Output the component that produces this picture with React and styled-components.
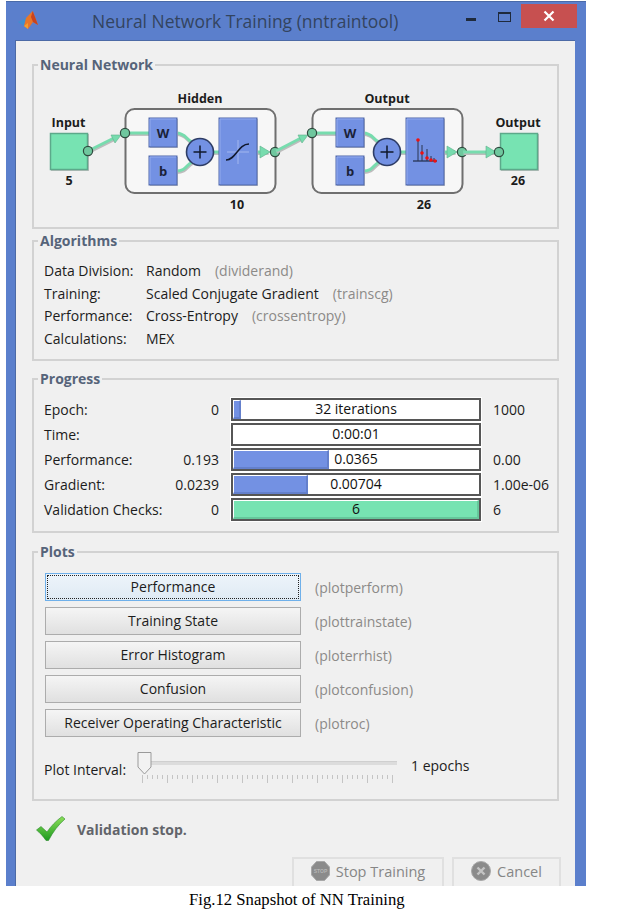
import React from 'react'
import styled, { createGlobalStyle } from 'styled-components'

const GlobalStyle = createGlobalStyle`
  html, body { margin: 0; padding: 0; background: #fff; }
  body { font-family: "Open Sans", "Liberation Sans", sans-serif; font-size: 14px; color: #1c1c1c; }
`

const Page = styled.div`
  width: 623px;
  height: 915px;
  padding: 1px 0 0 6px;
  box-sizing: border-box;
`

const Window = styled.div`
  width: 580px;
  height: 885px;
  background: #5b7fcc;
  display: flex;
  flex-direction: column;
  border-top: 1px solid #4a6aa8;
  box-sizing: border-box;
`

const TitleBar = styled.div`
  height: 38px;
  flex: none;
  display: flex;
  align-items: center;
  padding-left: 12px;
`

const AppTitle = styled.div`
  margin-left: 52px;
  font-size: 17.5px;
  color: #33445f;
  white-space: nowrap;
`

const Controls = styled.div`
  margin-left: auto;
  margin-right: 9px;
  align-self: flex-start;
  display: flex;
  align-items: flex-start;
  margin-top: 2px;
`

const MinButton = styled.div`
  width: 10px;
  height: 3px;
  background: #1f2a3c;
  margin: 14px 22px 0 0;
`

const MaxButton = styled.div`
  width: 13px;
  height: 10px;
  box-sizing: border-box;
  border: 1px solid #1f2a3c;
  border-top-width: 2px;
  margin: 8px 10px 0 0;
`

const CloseButton = styled.div`
  width: 56px;
  height: 24px;
  background: #c75050;
  display: flex;
  align-items: center;
  justify-content: center;
`

const Client = styled.div`
  flex: 1;
  min-height: 0;
  margin: 0 11px 0 9px;
  padding: 16px 16px 0;
  background: #f0f0f0;
  border-top: 1px solid #4c6aa6;
  border-left: 1px solid #4c6aa6;
  overflow: hidden;
  box-sizing: border-box;
`

const Group = styled.fieldset`
  margin: ${p => p.$gap}px 0 0;
  height: ${p => p.$h}px;
  padding: ${p => p.$top}px 10px 0;
  min-width: 0;
  box-sizing: border-box;
  border: 2px solid #d2d2d2;
`

const GroupTitle = styled.legend`
  margin-left: -6px;
  padding: 0 2px;
  height: 16px;
  line-height: 16px;
  font-weight: 700;
  font-size: 14px;
  color: #56647a;
`

const DiagramSvg = styled.svg`
  display: block;
  margin-left: -10px;
`

const AlgoRow = styled.div`
  display: flex;
  height: 22.6px;
  line-height: 22.6px;
`

const AlgoLabel = styled.div`
  width: 102px;
`

const Muted = styled.span`
  color: #8c8a88;
  margin-left: ${p => p.$left || 0}px;
`

const ProgressGrid = styled.div`
  display: grid;
  grid-template-columns: 120px 67px 250px 1fr;
  grid-auto-rows: 23px;
  row-gap: 2px;
  align-items: center;
`

const MinValue = styled.div`
  text-align: right;
  padding-right: 12px;
`

const MaxValue = styled.div`
  padding-left: 12px;
  white-space: nowrap;
`

const Bar = styled.div`
  position: relative;
  height: 23px;
  box-sizing: border-box;
  border: 2px solid #565656;
  background: #fff;
  outline: 1px solid #fff;
`

const BarFill = styled.div`
  height: 100%;
  box-sizing: border-box;
  background: ${p => p.$color};
  border: 1px solid #fff;
  border-bottom: 2px solid ${p => p.$shade};
  border-right: 2px solid ${p => p.$shade};
`

const BarText = styled.div`
  position: absolute;
  inset: 0;
  text-align: center;
  line-height: 18px;
  color: #111;
`

const ButtonRow = styled.div`
  display: flex;
  align-items: center;
  height: 28px;
  margin: 0 0 6px 1px;
`

const PlotButton = styled.div`
  width: 256px;
  height: 28px;
  flex: none;
  box-sizing: border-box;
  margin-right: 14px;
  text-align: center;
  line-height: 26px;
  color: #1c1c1c;
  background: ${p => p.$focus ? 'linear-gradient(#edf4fa, #dfeaf4)' : 'linear-gradient(#f5f5f5, #e0e0e0)'};
  border: 1px solid ${p => p.$focus ? '#6fb0ea' : '#acacac'};
  outline: ${p => p.$focus ? '1px dotted #222' : 'none'};
  outline-offset: -3px;
`

const SliderRow = styled.div`
  display: flex;
  margin-top: 14px;
  height: 34px;
`

const SliderLabel = styled.div`
  width: 93px;
  flex: none;
  margin-top: 9px;
  line-height: 20px;
`

const Slider = styled.div`
  position: relative;
  width: 260px;
  flex: none;
`

const Track = styled.div`
  position: absolute;
  left: 6px;
  right: 0;
  top: 10px;
  height: 3px;
  background: #dcdcdc;
  border-top: 1px solid #cfcfcf;
`

const Thumb = styled.svg`
  position: absolute;
  left: 0;
  top: 0;
`

const TickBox = styled.div`
  position: absolute;
  left: 5px;
  top: 24px;
`

const SliderValue = styled.div`
  margin: 3px 0 0 14px;
  line-height: 24px;
`

const StatusRow = styled.div`
  display: flex;
  align-items: center;
  height: 30px;
  margin: 13px 0 0 4px;
  gap: 11px;
`

const StatusText = styled.div`
  font-weight: 700;
  color: #62646a;
`

const Footer = styled.div`
  display: flex;
  justify-content: flex-end;
  gap: 8px;
  margin: 13px -2px 0 0;
`

const FooterButton = styled.div`
  width: ${p => p.$w}px;
  height: 40px;
  box-sizing: border-box;
  border: 2px solid #e0e0e0;
  display: flex;
  justify-content: center;
  gap: 6px;
  padding-top: 2px;
  font-size: 14.5px;
  line-height: 22px;
  color: #868686;
`

const Caption = styled.div`
  width: 586px;
  margin-top: 5px;
  padding-left: 183px;
  box-sizing: border-box;
  font-family: "Liberation Serif", serif;
  font-size: 16.7px;
  line-height: 18px;
  color: #000;
`

const blue = '#7391e3'
const green = '#77e3b2'

const Node = ({ x, y }) => (
  <circle cx={x} cy={y} r="4.6" fill="#6fc79e" stroke="#2f4a3e" strokeWidth="1.2" />
)

const Wire = ({ d }) => (
  <g fill="none">
    <path d={d} stroke="#bcbcbc" strokeWidth="3" transform="translate(0.6 1.4)" />
    <path d={d} stroke="#77dcae" strokeWidth="3" />
  </g>
)

const Head = ({ points }) => (
  <polygon points={points} fill="#77dcae" stroke="#5fb08c" strokeWidth="0.6" />
)

const Block = ({ x, y, w, h, children }) => (
  <g>
    <rect x={x + 1} y={y + 1} width={w} height={h} fill="#c4c4c4" />
    <rect x={x} y={y} width={w} height={h} fill={blue} stroke="#4f67a8" strokeWidth="1" />
    <path d={`M${x + 1} ${y + 1}H${x + w - 1}M${x + 1} ${y + 1}V${y + h - 1}`} stroke="#93abee" strokeWidth="1" fill="none" />
    {children}
  </g>
)

const Label = ({ x, y, children }) => (
  <text x={x} y={y} textAnchor="middle" fontFamily="Open Sans, sans-serif" fontSize="12.5" fontWeight="700" fill="#1c1c1c">{children}</text>
)

const Layer = ({ dx, title, size, children }) => (
  <g transform={`translate(${dx} 0)`}>
    <Label x={200} y={103}>{title}</Label>
    <rect x="126" y="110" width="150" height="84" rx="9" fill="#c8c8c8" />
    <rect x="125.5" y="109" width="150" height="84" rx="9" fill="#f7f7f7" stroke="#6f6f6f" strokeWidth="2" />
    <Wire d="M125 133H150" />
    <Wire d="M176 133C186 133 186 140 192 142" />
    <Wire d="M176 171C186 171 186 165 192 162" />
    <Wire d="M212 152H220" />
    <Wire d="M256 152H268" />
    <Head points="260,146 260,158 270,152" />
    <Block x={149} y={118} w={28} h={29}>
      <text x="163" y="138" textAnchor="middle" fontFamily="Open Sans, sans-serif" fontSize="13" fontWeight="700" fill="#1a2238">W</text>
    </Block>
    <Block x={149} y={156} w={28} h={29}>
      <text x="163" y="176" textAnchor="middle" fontFamily="Open Sans, sans-serif" fontSize="13" fontWeight="700" fill="#1a2238">b</text>
    </Block>
    <circle cx="200" cy="152" r="13.5" fill={blue} stroke="#2e3d66" strokeWidth="1.6" />
    <path d="M193.5 152H206.5M200 145.5V158.5" stroke="#10182c" strokeWidth="1.5" />
    <Block x={219} y={118} w={38} h={67}>{children}</Block>
    <Node x={125} y={133} />
    <Node x={275} y={152} />
    <Label x={237} y={209}>{size}</Label>
  </g>
)

const Diagram = () => (
  <DiagramSvg width="523" height="140" viewBox="34 80 523 140">
    <Label x={68.5} y={127}>Input</Label>
    <rect x="51" y="134" width="38" height="37" fill="#bdbdbd" />
    <rect x="50.5" y="133.5" width="37" height="36" fill={green} stroke="#5ca98a" strokeWidth="1.5" />
    <Label x={69} y={185}>5</Label>
    <Wire d="M88 151L114 138" />
    <Head points="111,135 121,135 115,143" />
    <Node x={88} y={151} />

    <Layer dx={0} title="Hidden" size="10">
      <path d="M227 152H249M238 140V164" stroke="#94abeb" strokeWidth="1.5" />
      <path d="M226 160C236 160 238 144 249 144" fill="none" stroke="#10182c" strokeWidth="1.5" />
    </Layer>

    <Wire d="M276 151L301 138" />
    <Head points="298,135 308,135 302,143" />

    <Layer dx={187} title="Output" size="26">
      <path d="M226 161H250" stroke="#10182c" strokeWidth="1" />
      <path d="M231 140V161M235 145V161M240 149V161M244 156V161M247 158V161" stroke="#2a3550" strokeWidth="1" />
      <path d="M231 140h.01M235 153h.01M240 158h.01M244 160h.01M248 161h.01" stroke="#ee1111" strokeWidth="3.6" strokeLinecap="round" />
    </Layer>

    <Wire d="M463 152H495" />
    <Head points="486,146 486,158 496,152" />
    <rect x="501" y="134" width="38" height="37" fill="#bdbdbd" />
    <rect x="500.5" y="133.5" width="37" height="36" fill={green} stroke="#5ca98a" strokeWidth="1.5" />
    <Node x={499} y={152} />
    <Label x={518} y={127}>Output</Label>
    <Label x={518} y={185}>26</Label>
  </DiagramSvg>
)

const MatlabLogo = () => (
  <svg width="22" height="24" viewBox="0 0 22 24" style={{ display: 'block' }}>
    <path d="M0 13L8 9L11 12L6 17Z" fill="#3f8fd0" />
    <path d="M8 9L14.7 2L20 16L15 13L10 20L6 17Z" fill="#e8762a" />
    <path d="M14.7 2L20 16L15 13L13 8Z" fill="#c8431f" />
    <path d="M6 17L10 14L10 20Z" fill="#f0a030" />
  </svg>
)

const CheckIcon = () => (
  <svg width="30" height="26" viewBox="0 0 30 26">
    <defs>
      <linearGradient id="chk" x1="0" y1="0" x2="0" y2="1">
        <stop offset="0" stopColor="#8ee05a" />
        <stop offset="1" stopColor="#1d9a20" />
      </linearGradient>
    </defs>
    <path d="M0.5 14L5 10.5L11 16C15 10 20 5 26 0.5L29 3C22 9 17 16 12.5 24.5L10 24.5C7 20 4 17 0.5 14Z" fill="url(#chk)" stroke="#2b8a2b" strokeWidth="0.6" />
  </svg>
)

const StopIcon = () => (
  <svg width="19" height="20" viewBox="0 0 19 20">
    <polygon points="5.5,0.5 13.5,0.5 18.5,6 18.5,14 13.5,19.5 5.5,19.5 0.5,14 0.5,6" fill="#8b8b8b" stroke="#a8a8a8" />
    <text x="9.5" y="12" textAnchor="middle" fontSize="5" fontWeight="700" fill="#b6b6b6" fontFamily="Liberation Sans, sans-serif">STOP</text>
  </svg>
)

const CancelIcon = () => (
  <svg width="20" height="20" viewBox="0 0 20 20">
    <circle cx="10" cy="10" r="9.5" fill="#8b8b8b" stroke="#a8a8a8" />
    <path d="M6.5 6.5L13.5 13.5M13.5 6.5L6.5 13.5" stroke="#c4c4c4" strokeWidth="2.4" />
  </svg>
)

const TICKS = Array.from({ length: 51 }, (_, i) => i)

const Ticks = () => (
  <svg width="254" height="9" viewBox="0 0 254 9" style={{ display: 'block' }}>
    {TICKS.map(i => (
      <line key={i} x1={i * 5 + 0.5} x2={i * 5 + 0.5} y1="0" y2={i % 5 === 0 ? 8 : 4} stroke="#c4c4c4" />
    ))}
  </svg>
)

const algorithms = [
  ['Data Division:', 'Random', 'dividerand', 14],
  ['Training:', 'Scaled Conjugate Gradient', 'trainscg', 14],
  ['Performance:', 'Cross-Entropy', 'crossentropy', 14],
  ['Calculations:', 'MEX'],
]

const progress = [
  { label: 'Epoch:', min: '0', max: '1000', text: '32 iterations', fill: 3.3 },
  { label: 'Time:', text: '0:00:01' },
  { label: 'Performance:', min: '0.193', max: '0.00', text: '0.0365', fill: 39 },
  { label: 'Gradient:', min: '0.0239', max: '1.00e-06', text: '0.00704', fill: 30.5 },
  { label: 'Validation Checks:', min: '0', max: '6', text: '6', fill: 100, ok: true },
]

const plots = [
  ['Performance', 'plotperform', true],
  ['Training State', 'plottrainstate'],
  ['Error Histogram', 'ploterrhist'],
  ['Confusion', 'plotconfusion'],
  ['Receiver Operating Characteristic', 'plotroc'],
]

export default function App() {
  return (
    <Page>
      <GlobalStyle />
      <Window>
        <TitleBar>
          <MatlabLogo />
          <AppTitle>Neural Network Training (nntraintool)</AppTitle>
          <Controls>
            <MinButton />
            <MaxButton />
            <CloseButton>
              <svg width="12" height="12" viewBox="0 0 12 12">
                <path d="M1.5 1.5L10.5 10.5M10.5 1.5L1.5 10.5" stroke="#fff" strokeWidth="2.2" />
              </svg>
            </CloseButton>
          </Controls>
        </TitleBar>
        <Client>
          <Group $gap={0} $h={172} $top={7}>
            <GroupTitle>Neural Network</GroupTitle>
            <Diagram />
          </Group>

          <Group $gap={4} $h={128} $top={11}>
            <GroupTitle>Algorithms</GroupTitle>
            {algorithms.map(([label, value, fn, left]) => (
              <AlgoRow key={label}>
                <AlgoLabel>{label}</AlgoLabel>
                <div>
                  {value}
                  {fn && <Muted $left={left}>({fn})</Muted>}
                </div>
              </AlgoRow>
            ))}
          </Group>

          <Group $gap={10} $h={162} $top={11}>
            <GroupTitle>Progress</GroupTitle>
            <ProgressGrid>
              {progress.map(row => (
                <React.Fragment key={row.label}>
                  <div>{row.label}</div>
                  <MinValue>{row.min}</MinValue>
                  <Bar>
                    {row.fill && (
                      <BarFill
                        style={{ width: `${row.fill}%` }}
                        $color={row.ok ? green : blue}
                        $shade={row.ok ? '#66c79b' : '#6480cc'}
                      />
                    )}
                    <BarText>{row.text}</BarText>
                  </Bar>
                  <MaxValue>{row.max}</MaxValue>
                </React.Fragment>
              ))}
            </ProgressGrid>
          </Group>

          <Group $gap={11} $h={257} $top={13}>
            <GroupTitle>Plots</GroupTitle>
            {plots.map(([label, fn, focus]) => (
              <ButtonRow key={label}>
                <PlotButton $focus={focus}>{label}</PlotButton>
                <Muted>({fn})</Muted>
              </ButtonRow>
            ))}
            <SliderRow>
              <SliderLabel>Plot Interval:</SliderLabel>
              <Slider>
                <Track />
                <Thumb width="15" height="24" viewBox="0 0 15 24">
                  <path d="M1 1.5H14V16L7.5 23L1 16Z" fill="#f2f2f2" stroke="#9a9a9a" />
                </Thumb>
                <TickBox><Ticks /></TickBox>
              </Slider>
              <SliderValue>1 epochs</SliderValue>
            </SliderRow>
          </Group>

          <StatusRow>
            <CheckIcon />
            <StatusText>Validation stop.</StatusText>
          </StatusRow>

          <Footer>
            <FooterButton $w={152}><StopIcon />Stop Training</FooterButton>
            <FooterButton $w={109}><CancelIcon />Cancel</FooterButton>
          </Footer>
        </Client>
      </Window>
      <Caption>Fig.12 Snapshot of NN Training</Caption>
    </Page>
  )
}
